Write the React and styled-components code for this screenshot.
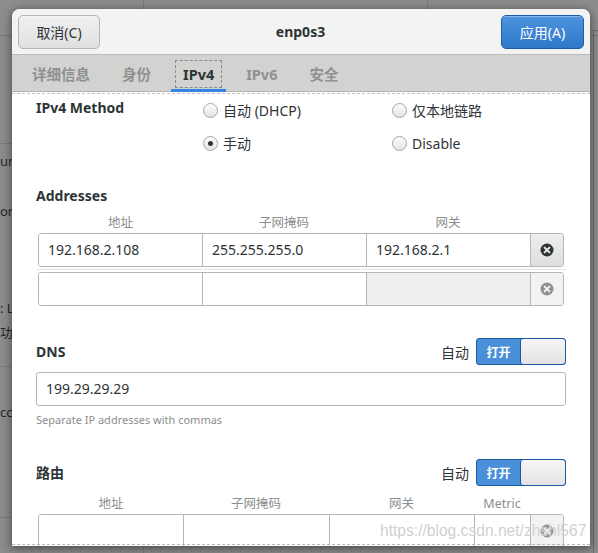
import styled, { createGlobalStyle } from "styled-components";

const GlobalStyle = createGlobalStyle`
  html, body { margin: 0; padding: 0; }
  body {
    font-family: "Noto Sans", "Noto Sans CJK SC", sans-serif;
    font-size: 14px;
    color: #2e3436;
  }
`;

const Screen = styled.div`
  position: relative;
  width: 598px;
  height: 553px;
  overflow: hidden;
  background: #8c8c8c;
  display: flex;
  flex-direction: column;
`;

/* dimmed window behind the dialog */
const BgTop = styled.div`
  height: 35px;
  flex-shrink: 0;
  border-bottom: 1px solid #777;
  display: flex;
`;

const BgTopCell = styled.div`
  width: ${(p) => p.$w}px;
  border-right: 1px solid #7b7b7b;
`;

const BgBody = styled.div`
  flex: 1;
  display: flex;
`;

const BgSidebar = styled.div`
  width: 143px;
  border-right: 1px solid #7b7b7b;
  display: flex;
  flex-direction: column;
`;

const BgSection = styled.div`
  height: ${(p) => p.$h}px;
  border-bottom: 1px solid #7b7b7b;
  display: flex;
  flex-direction: column;
`;

const BgText = styled.div`
  margin-top: ${(p) => p.$gap}px;
  line-height: 20px;
  color: #262626;
  font-size: 13px;
  white-space: nowrap;
`;

const BgMain = styled.div`
  flex: 1;
  display: flex;
  justify-content: flex-end;
`;

const BgPanel = styled.div`
  width: 4px;
  margin-top: -6px;
  border-left: 1px solid #6f6f6f;
  border-top: 1px solid #6f6f6f;
`;

/* dialog */
const Dialog = styled.div`
  position: absolute;
  left: 12px;
  top: 9px;
  width: 578px;
  height: 537px;
  background: #fff;
  border-radius: 8px 8px 0 0;
  box-shadow: 0 2px 8px 1px rgba(0, 0, 0, 0.45);
  overflow: hidden;
  display: flex;
  flex-direction: column;
`;

const HeaderBar = styled.div`
  height: 46px;
  flex-shrink: 0;
  box-sizing: border-box;
  background: #f3f3f3;
  border-bottom: 1px solid #bcbcbc;
  display: flex;
  align-items: flex-start;
  padding: 6px 6px 0;
`;

const Button = styled.button`
  width: ${(p) => p.$w}px;
  height: 34px;
  box-sizing: border-box;
  border-radius: 5px;
  font-family: inherit;
  font-size: 14px;
  padding: 0;
  border: 1px solid ${(p) => (p.$primary ? "#1c5ca8" : "#b4b4b2")};
  color: ${(p) => (p.$primary ? "#fff" : "#2e3436")};
  background: ${(p) =>
    p.$primary
      ? "linear-gradient(#4d93de, #2f78c9)"
      : "linear-gradient(#efefef, #e0e0e0)"};
  box-shadow: inset 0 1px rgba(255, 255, 255, 0.35);
`;

const Title = styled.div`
  flex: 1;
  text-align: center;
  font-weight: bold;
  font-size: 14px;
  line-height: 34px;
`;

const TabBar = styled.div`
  height: 37px;
  flex-shrink: 0;
  background: #d2d2d0;
  box-shadow: inset 0 -1px #b3b3b1;
  display: flex;
  gap: 8px;
  padding-left: 8px;
`;

const Tab = styled.div`
  padding: 0 4px;
  display: flex;
  align-items: center;
  box-shadow: ${(p) => (p.$active ? "inset 0 -3px #3584e4" : "none")};
`;

const TabLabel = styled.span`
  height: 28px;
  line-height: 29px;
  padding: 0 8px;
  font-weight: bold;
  font-size: 14.5px;
  color: ${(p) => (p.$active ? "#2e3436" : "#8e9192")};
  outline: ${(p) => (p.$active ? "1px dashed #8a8a8a" : "none")};
  outline-offset: -1px;
`;

const Scroller = styled.div`
  flex: 1;
  position: relative;
  overflow: hidden;
  border-top: 1px dashed #c2c2c2;
  margin-top: 1px;

  &::after {
    content: "";
    position: absolute;
    left: 0;
    right: 0;
    bottom: 1px;
    border-top: 1px dashed #b8b8b8;
  }
`;

const Content = styled.div`
  padding: 6px 24px 0;
  display: flex;
  flex-direction: column;
`;

const MethodGrid = styled.div`
  display: grid;
  grid-template-columns: 167px 189px 1fr;
  row-gap: 13px;
`;

const Heading = styled.div`
  font-weight: bold;
  font-size: 14px;
  line-height: 20px;
  margin-top: ${(p) => p.$gap || 0}px;
`;

const MethodLabel = styled(Heading)`
  grid-row: 1 / span 2;
  margin-top: -2px;
`;

const RadioItem = styled.div`
  height: 20px;
  display: flex;
  align-items: center;
  gap: 5px;
  font-size: 14px;
`;

const Radio = styled.span`
  width: 15px;
  height: 15px;
  box-sizing: border-box;
  border-radius: 50%;
  border: 1px solid #a6a6a4;
  background: linear-gradient(#fdfdfd, #e4e4e4);
  display: flex;
  align-items: center;
  justify-content: center;

  &::after {
    content: "";
    width: 5px;
    height: 5px;
    border-radius: 50%;
    background: ${(p) => (p.$checked ? "#2e3436" : "transparent")};
  }
`;

const ColHeads = styled.div`
  display: grid;
  grid-template-columns: ${(p) => p.$cols};
  padding: 0 3px;
  margin-top: ${(p) => p.$gap}px;
`;

const ColHead = styled.div`
  text-align: center;
  font-size: 12.5px;
  line-height: 16px;
  color: #8b8e8f;
`;

const ListRow = styled.div`
  padding: 2px 2px;
  border-bottom: ${(p) => (p.$sep ? "1px solid #e3e3e3" : "none")};
`;

const Linked = styled.div`
  display: grid;
  grid-template-columns: ${(p) => p.$cols};
  height: 34px;
  box-sizing: border-box;
  border: 1px solid #b6b6b3;
  border-radius: 3px;
  overflow: hidden;
`;

const Cell = styled.div`
  box-sizing: border-box;
  padding: 0 9px;
  line-height: 32px;
  font-size: 14px;
  background: ${(p) => (p.$off ? "#efefef" : "#fff")};
  border-left: ${(p) => (p.$first ? "none" : "1px solid #b6b6b3")};
`;

const DeleteBtn = styled.div`
  border-left: 1px solid #b6b6b3;
  display: flex;
  align-items: center;
  justify-content: center;
  background: ${(p) =>
    p.$off ? "#f2f2f2" : "linear-gradient(#eeeeee, #dedede)"};
`;

const SwitchRow = styled.div`
  display: flex;
  align-items: center;
  justify-content: space-between;
  height: 27px;
  margin-top: ${(p) => p.$gap}px;
`;

const SwitchGroup = styled.div`
  display: flex;
  align-items: center;
  gap: 7px;
  font-size: 14px;
`;

const Switch = styled.div`
  display: flex;
  width: 90px;
  height: 27px;
  box-sizing: border-box;
  border: 1px solid #1b5aa0;
  border-radius: 3px;
  overflow: hidden;
  background: #4a90d9;
`;

const SwitchOn = styled.div`
  width: 43px;
  display: flex;
  align-items: center;
  justify-content: center;
  color: #fff;
  font-weight: bold;
  font-size: 12px;
`;

const SwitchKnob = styled.div`
  flex: 1;
  border-left: 1px solid #1b5aa0;
  border-radius: 3px;
  background: linear-gradient(#f6f6f6, #e3e3e3);
`;

const Entry = styled.div`
  margin-top: 7px;
  height: 34px;
  box-sizing: border-box;
  border: 1px solid #b6b6b3;
  border-radius: 3px;
  padding: 0 9px;
  line-height: 32px;
  font-size: 14px;
`;

const Hint = styled.div`
  margin-top: 6px;
  font-size: 11px;
  line-height: 16px;
  color: #8b8e8f;
`;

const Watermark = styled.div`
  position: absolute;
  left: 380px;
  top: 522px;
  font-family: "Liberation Sans", Arial, sans-serif;
  font-size: 15.6px;
  color: rgba(196, 196, 196, 0.8);
  text-shadow: 0 0 1px rgba(255, 255, 255, 0.9);
  white-space: nowrap;
  pointer-events: none;
`;

const DeleteIcon = ({ off }) => (
  <svg width="14" height="14" viewBox="0 0 14 14">
    <circle cx="7" cy="7" r="6.5" fill={off ? "#8e9192" : "#2e3436"} />
    <path
      d="M4.6 4.6 L9.4 9.4 M9.4 4.6 L4.6 9.4"
      stroke={off ? "#f2f2f2" : "#e8e8e8"}
      strokeWidth="2"
      strokeLinecap="round"
    />
  </svg>
);

const addrCols = "163px 164px 164px 1fr";
const routeCols = "144px 146px 145px 56px 1fr";

export default function App() {
  return (
    <Screen>
      <GlobalStyle />
      <BgTop>
        <BgTopCell $w={143} />
        <BgTopCell $w={283} />
      </BgTop>
      <BgBody>
        <BgSidebar>
          <BgSection $h={107} />
          <BgSection $h={222}>
            <BgText $gap={7}>un</BgText>
            <BgText $gap={30}>or</BgText>
            <BgText $gap={77}>: L</BgText>
            <BgText $gap={4}>功</BgText>
          </BgSection>
          <BgSection $h={150}>
            <BgText $gap={35}>cc</BgText>
          </BgSection>
        </BgSidebar>
        <BgMain>
          <BgPanel />
        </BgMain>
      </BgBody>

      <Dialog>
        <HeaderBar>
          <Button $w={82}>取消(C)</Button>
          <Title>enp0s3</Title>
          <Button $w={83} $primary>
            应用(A)
          </Button>
        </HeaderBar>
        <TabBar>
          {["详细信息", "身份", "IPv4", "IPv6", "安全"].map((t) => (
            <Tab key={t} $active={t === "IPv4"}>
              <TabLabel $active={t === "IPv4"}>{t}</TabLabel>
            </Tab>
          ))}
        </TabBar>
        <Scroller>
          <Content>
            <MethodGrid>
              <MethodLabel>IPv4 Method</MethodLabel>
              <RadioItem>
                <Radio />
                自动 (DHCP)
              </RadioItem>
              <RadioItem>
                <Radio />
                仅本地链路
              </RadioItem>
              <RadioItem>
                <Radio $checked />
                手动
              </RadioItem>
              <RadioItem>
                <Radio />
                Disable
              </RadioItem>
            </MethodGrid>

            <Heading $gap={33}>Addresses</Heading>
            <ColHeads $cols={addrCols} $gap={9}>
              <ColHead>地址</ColHead>
              <ColHead>子网掩码</ColHead>
              <ColHead>网关</ColHead>
            </ColHeads>
            <ListRow $sep>
              <Linked $cols={addrCols}>
                <Cell $first>192.168.2.108</Cell>
                <Cell>255.255.255.0</Cell>
                <Cell>192.168.2.1</Cell>
                <DeleteBtn>
                  <DeleteIcon />
                </DeleteBtn>
              </Linked>
            </ListRow>
            <ListRow>
              <Linked $cols={addrCols}>
                <Cell $first />
                <Cell />
                <Cell $off />
                <DeleteBtn $off>
                  <DeleteIcon off />
                </DeleteBtn>
              </Linked>
            </ListRow>

            <SwitchRow $gap={30}>
              <Heading>DNS</Heading>
              <SwitchGroup>
                自动
                <Switch>
                  <SwitchOn>打开</SwitchOn>
                  <SwitchKnob />
                </Switch>
              </SwitchGroup>
            </SwitchRow>
            <Entry>199.29.29.29</Entry>
            <Hint>Separate IP addresses with commas</Hint>

            <SwitchRow $gap={31}>
              <Heading>路由</Heading>
              <SwitchGroup>
                自动
                <Switch>
                  <SwitchOn>打开</SwitchOn>
                  <SwitchKnob />
                </Switch>
              </SwitchGroup>
            </SwitchRow>
            <ColHeads $cols={routeCols} $gap={10}>
              <ColHead>地址</ColHead>
              <ColHead>子网掩码</ColHead>
              <ColHead>网关</ColHead>
              <ColHead>Metric</ColHead>
            </ColHeads>
            <ListRow>
              <Linked $cols={routeCols}>
                <Cell $first />
                <Cell />
                <Cell />
                <Cell />
                <DeleteBtn $off>
                  <DeleteIcon off />
                </DeleteBtn>
              </Linked>
            </ListRow>
          </Content>
        </Scroller>
      </Dialog>
      <Watermark>https://blog.csdn.net/zhshl567</Watermark>
    </Screen>
  );
}
